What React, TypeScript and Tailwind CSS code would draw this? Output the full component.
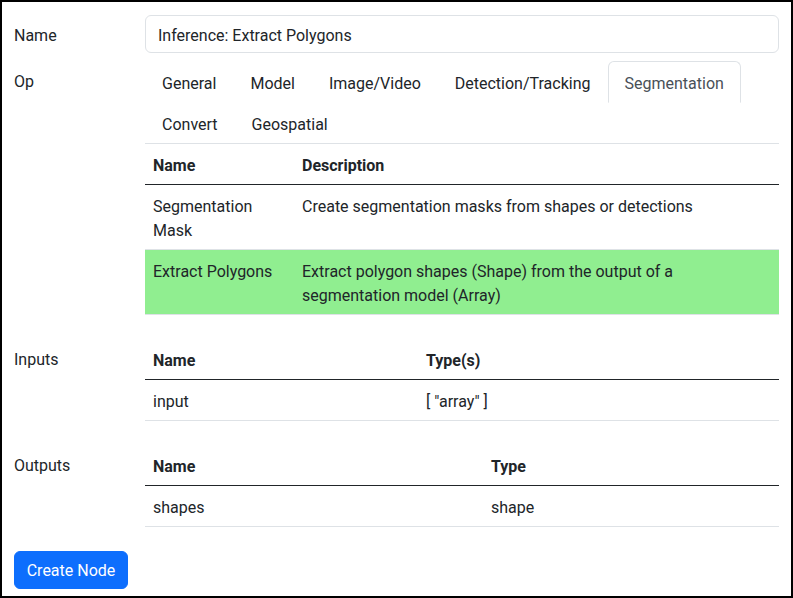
import React from 'react';

const tabs = ['General', 'Model', 'Image/Video', 'Detection/Tracking', 'Segmentation', 'Convert', 'Geospatial'];

const th = 'text-left font-bold px-2 pt-[10px] pb-[6px] border-b border-[#212529]';
const td = 'align-top px-2 pt-[10px] pb-[6px] border-b border-[#dee2e6]';

function FormRow({ label, children }: { label: string; children: React.ReactNode }) {
  return (
    <div className="flex mb-2">
      <div className="w-[131px] shrink-0 pt-[9px]">{label}</div>
      <div className="flex-1 min-w-0">{children}</div>
    </div>
  );
}

export default function App() {
  const activeTab = 'Segmentation';

  return (
    <div className="w-[793px] h-[598px] border-2 border-black bg-white px-3 pt-[13px] font-['Roboto',sans-serif] text-[16px] leading-6 text-[#212529]">
      {/* Name */}
      <FormRow label="Name">
        <div className="w-full h-[38px] px-3 pt-[8px] border border-[#dee2e6] rounded-md">
          Inference: Extract Polygons
        </div>
      </FormRow>

      {/* Op */}
      <FormRow label="Op">
        <div className="flex flex-wrap border-b border-[#dee2e6]">
          {tabs.map((t) => (
            <div
              key={t}
              className={
                t === activeTab
                  ? 'px-4 pt-[10px] pb-[6px] -mb-px border border-[#dee2e6] border-b-white rounded-t-md bg-white text-[#495057]'
                  : 'px-4 pt-[10px] pb-[6px] -mb-px border border-transparent text-[#212529]'
              }
            >
              {t}
            </div>
          ))}
        </div>
        <table className="w-full mb-4">
          <thead>
            <tr>
              <th className={`w-[149px] ${th}`}>Name</th>
              <th className={th}>Description</th>
            </tr>
          </thead>
          <tbody>
            <tr>
              <td className={td}>Segmentation Mask</td>
              <td className={td}>Create segmentation masks from shapes or detections</td>
            </tr>
            <tr className="bg-[#90ee90]">
              <td className={td}>Extract Polygons</td>
              <td className={td}>
                Extract polygon shapes (Shape) from the output of a segmentation model (Array)
              </td>
            </tr>
          </tbody>
        </table>
      </FormRow>

      {/* Inputs */}
      <FormRow label="Inputs">
        <table className="w-full mb-4">
          <thead>
            <tr>
              <th className={`w-[273px] ${th}`}>Name</th>
              <th className={th}>Type(s)</th>
            </tr>
          </thead>
          <tbody>
            <tr>
              <td className={td}>input</td>
              <td className={td}>[ "array" ]</td>
            </tr>
          </tbody>
        </table>
      </FormRow>

      {/* Outputs */}
      <FormRow label="Outputs">
        <table className="w-full mb-4">
          <thead>
            <tr>
              <th className={`w-[338px] ${th}`}>Name</th>
              <th className={th}>Type</th>
            </tr>
          </thead>
          <tbody>
            <tr>
              <td className={td}>shapes</td>
              <td className={td}>shape</td>
            </tr>
          </tbody>
        </table>
      </FormRow>

      <button className="h-[38px] w-[114px] pt-[2px] border border-[#0d6efd] bg-[#0d6efd] text-white rounded-md">
        Create Node
      </button>
    </div>
  );
}
